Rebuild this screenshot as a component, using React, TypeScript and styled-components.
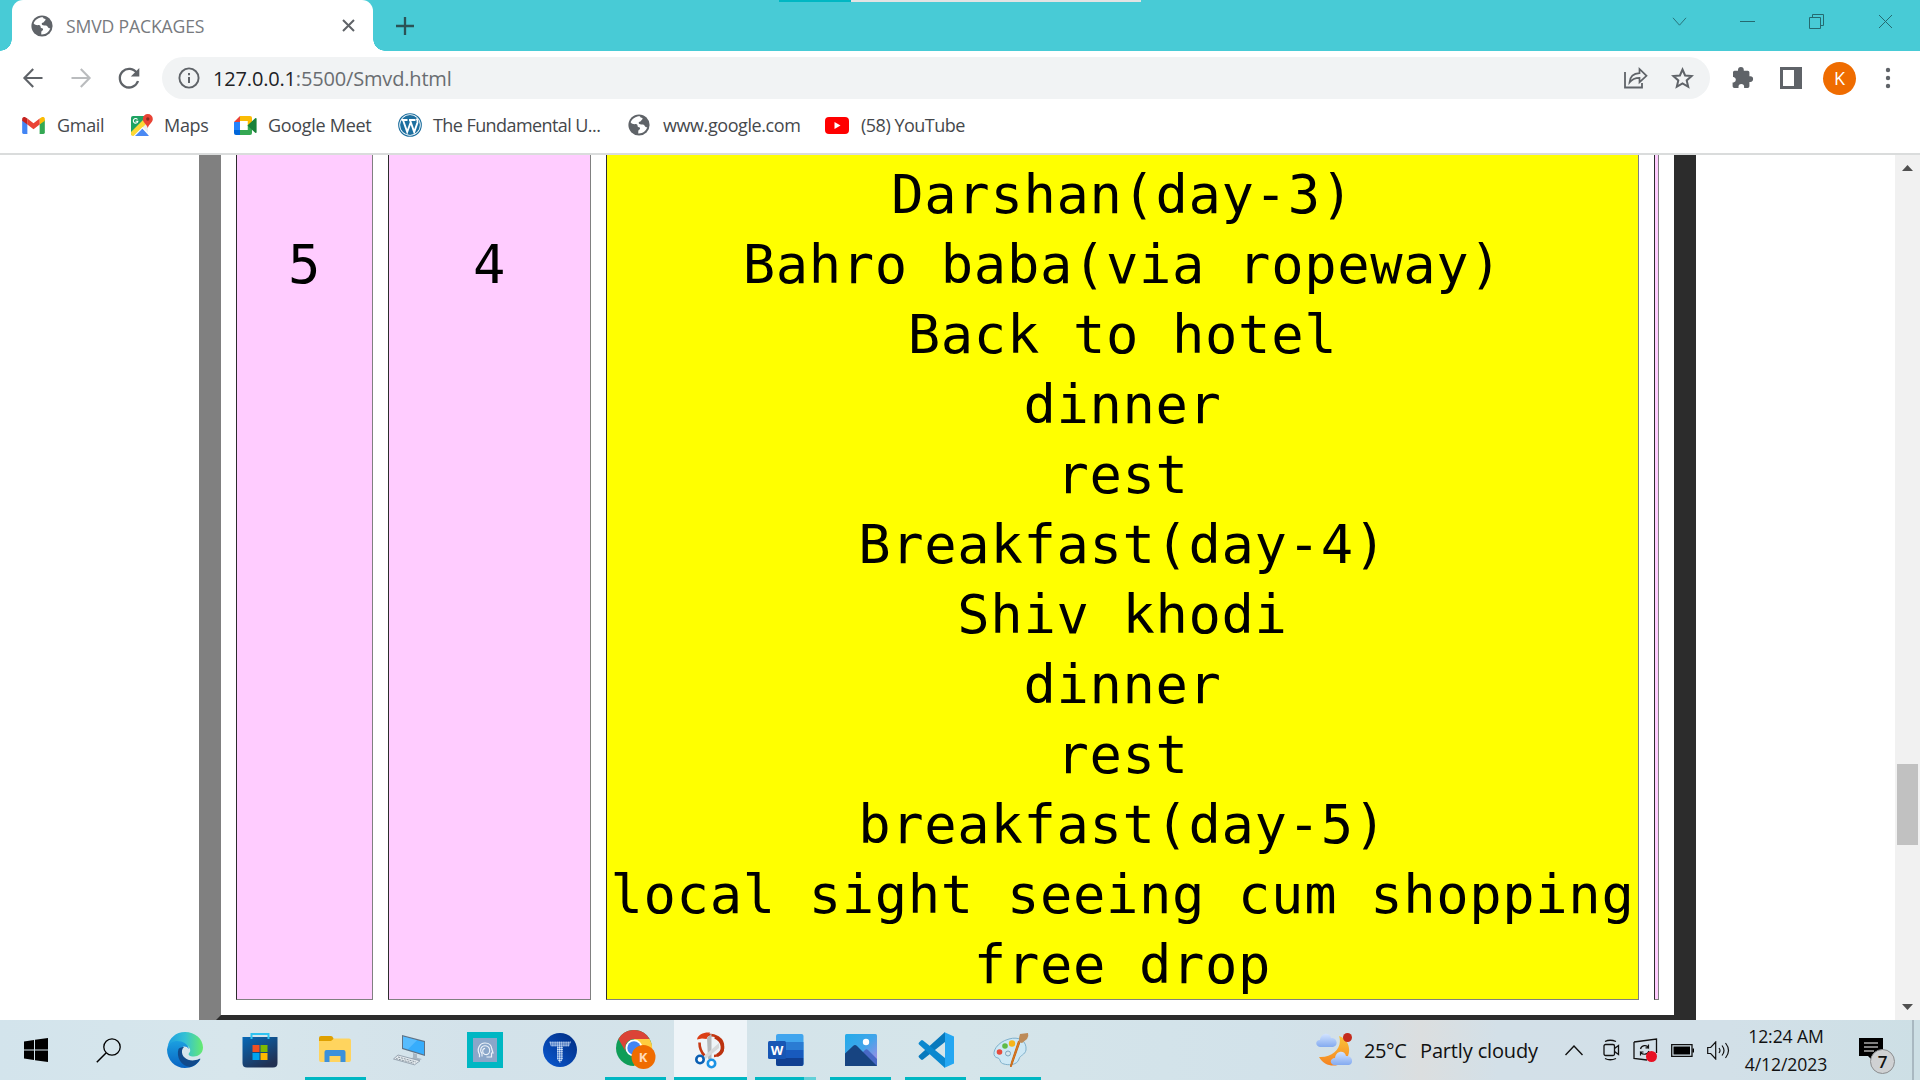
import React from "react";
import styled, { createGlobalStyle } from "styled-components";

const Global = createGlobalStyle`
  * { box-sizing: border-box; }
  body { margin: 0; overflow: hidden; background: #fff; font-family: "Open Sans", "Noto Sans", sans-serif; }
  svg { display: block; flex: none; }
`;

const Screen = styled.div`
  width: 1920px;
  height: 1080px;
  display: flex;
  flex-direction: column;
  overflow: hidden;
`;

/* ---------- Title bar ---------- */
const TabStrip = styled.header`
  height: 51px;
  flex: none;
  display: flex;
  background: #48cbd6;
  position: relative;
`;
const Tab = styled.div`
  width: 361px;
  height: 51px;
  margin-left: 12px;
  padding: 0 18px 0 19px;
  background: #fff;
  border-radius: 11px 11px 0 0;
  display: flex;
  align-items: center;
  position: relative;
  &::before, &::after {
    content: "";
    position: absolute;
    bottom: 0;
    width: 12px;
    height: 12px;
  }
  &::before { left: -12px; background: radial-gradient(circle at 0 0, #48cbd6 11.5px, #fff 12px); }
  &::after { right: -12px; background: radial-gradient(circle at 100% 0, #48cbd6 11.5px, #fff 12px); }
`;
const TabTitle = styled.span`
  flex: 1;
  margin-left: 13px;
  font-size: 17.6px;
  line-height: 24px;
  letter-spacing: -0.15px;
  color: #777a7e;
`;
const NewTab = styled.div`
  width: 40px;
  margin-left: 12px;
  display: flex;
  align-items: center;
  justify-content: center;
`;
const WindowButtons = styled.div`
  margin-left: auto;
  height: 43px;
  display: flex;
  align-items: center;
`;
const WinButton = styled.div<{ $w: number }>`
  width: ${p => p.$w}px;
  display: flex;
  justify-content: center;
`;
const TopStrip = styled.div`
  position: absolute;
  left: 779px;
  top: 0;
  width: 362px;
  height: 2px;
  background: linear-gradient(90deg, #00b7c3 72px, #e3e3e3 72px);
`;

/* ---------- Toolbar ---------- */
const Toolbar = styled.div`
  height: 54px;
  flex: none;
  display: flex;
  align-items: center;
  padding: 0 29px 0 21px;
`;
const NavButtons = styled.div`
  width: 141px;
  display: flex;
  align-items: center;
  gap: 24px;
`;
const AddressBar = styled.div`
  width: 1548px;
  height: 42px;
  border-radius: 21px;
  background: #f1f3f4;
  display: flex;
  align-items: center;
  padding: 0 16px;
`;
const Url = styled.div`
  flex: 1;
  margin-left: 13px;
  padding-top: 1px;
  font-size: 20px;
  line-height: 28px;
  letter-spacing: -0.17px;
  color: #696d71;
  b { font-weight: 400; color: #202124; }
`;
const AddressActions = styled.div`
  display: flex;
  gap: 22px;
  align-items: center;
`;
const ToolbarActions = styled.div`
  margin-left: auto;
  display: flex;
  align-items: center;
`;
const Avatar = styled.div`
  width: 33px;
  height: 33px;
  margin: 0 29px 0 21px;
  border-radius: 50%;
  background: #ef6c00;
  color: #fff;
  font: 18px/33px "Open Sans", sans-serif;
  text-align: center;
`;

/* ---------- Bookmarks ---------- */
const Bookmarks = styled.nav`
  height: 50px;
  flex: none;
  display: flex;
  align-items: center;
  padding: 0 0 8px 22px;
  border-bottom: 2px solid #dadcdc;
`;
const Bookmark = styled.div<{ $w: number; $gap?: number; $ls?: number }>`
  width: ${p => p.$w}px;
  display: flex;
  align-items: center;
  gap: ${p => p.$gap ?? 11}px;
  font-size: 18px;
  line-height: 26px;
  letter-spacing: ${p => p.$ls ?? -0.3}px;
  color: #45484c;
  white-space: nowrap;
`;

/* ---------- Page ---------- */
const Viewport = styled.main`
  height: 865px;
  flex: none;
  display: flex;
  overflow: hidden;
  background: #fff;
`;
const PageArea = styled.div`
  flex: 1;
  overflow: hidden;
  padding-left: 199px;
  display: flex;
  align-items: flex-start;
`;
const TableFrame = styled.div`
  width: 1497px;
  height: 882px;
  border: solid;
  border-width: 0 22px 22px;
  border-color: #2c2c2c #2c2c2c #2c2c2c #808080;
  padding: 0 15px 15px;
  display: flex;
  gap: 15px;
`;
const Cell = styled.div<{ $w: number; $fill?: string }>`
  width: ${p => p.$w}px;
  flex: none;
  height: 845px;
  overflow: hidden;
  border: solid;
  border-width: 0 1px 1px;
  border-color: #808080 #808080 #808080 #2c2c2c;
  background: ${p => p.$fill ?? "#fcf"};
  display: flex;
  flex-direction: column;
  justify-content: flex-end;
`;
const Line = styled.div`
  height: 70px;
  flex: none;
  font: 53.8px/72px "DejaVu Sans Mono", monospace;
  letter-spacing: 0.64px;
  text-align: center;
  white-space: pre;
  color: #000;
`;
const Lines = styled.div<{ $bottom: number }>`
  padding-bottom: ${p => p.$bottom}px;
`;
const Scrollbar = styled.aside`
  width: 25px;
  flex: none;
  background: #f1f1f1;
  display: flex;
  flex-direction: column;
  align-items: center;
`;
const Arrow = styled.div<{ $down?: boolean }>`
  height: 24px;
  display: flex;
  align-items: center;
  padding-top: 2px;
  transform: ${p => (p.$down ? "rotate(180deg)" : "none")};
`;
const Track = styled.div`
  flex: 1;
  width: 21px;
  padding-top: 585px;
`;
const Thumb = styled.div`
  height: 81px;
  background: #c1c1c1;
`;

/* ---------- Taskbar ---------- */
const Taskbar = styled.footer`
  height: 60px;
  flex: none;
  display: flex;
  background: linear-gradient(90deg, #d3e4ec 0%, #d7e6ec 12%, #d3e2ea 25%, #d5e5ea 50%, #d2e2ea 66%, #d3e0e7 71%, #dbdedf 74%, #d3e0e8 78%, #d2e0e8 90%, #cddfe5 100%);
`;
const Apps = styled.div`
  width: 1056px;
  flex: none;
  display: flex;
`;
const TaskButton = styled.div<{ $w?: number; $pad?: number; $active?: boolean; $stack?: boolean; $run?: boolean }>`
  width: ${p => p.$w ?? 75}px;
  height: 60px;
  flex: none;
  padding-left: ${p => p.$pad ?? 0}px;
  display: flex;
  flex-direction: column;
  align-items: center;
  justify-content: space-between;
  background: ${p => (p.$active ? "#eef4f8" : "transparent")};
  &::after {
    content: "";
    height: 3px;
    width: ${p => (p.$active ? "100%" : "61px")};
    background: ${p => (p.$run ? (p.$stack ? "linear-gradient(90deg,#00b7c3 49px,#62d0d8 49px)" : "#00b7c3") : "transparent")};
  }
`;
const AppIcon = styled.div`
  height: 57px;
  padding-top: 3px;
  display: flex;
  align-items: center;
`;
const Tray = styled.div`
  flex: 1;
  display: flex;
  align-items: center;
  padding-left: 260px;
  color: #111;
`;
const Weather = styled.div`
  width: 249px;
  display: flex;
  align-items: center;
  font-size: 20px;
  white-space: pre;
  letter-spacing: -0.15px;
`;
const Temp = styled.span`
  width: 56px;
  margin-left: 12px;
  letter-spacing: -0.4px;
`;
const Condition = styled.span`
  padding-top: 1px;
`;
const TrayIcons = styled.div`
  display: flex;
  align-items: center;
  gap: 13px;
  & > :first-child { margin-right: 7px; }
`;
const Clock = styled.div`
  width: 90px;
  margin-left: 11px;
  font-size: 17.6px;
  line-height: 28px;
  letter-spacing: -0.1px;
  text-align: center;
  white-space: nowrap;
`;
const Notice = styled.div`
  position: relative;
  width: 40px;
  height: 60px;
  margin-left: 28px;
  padding-top: 17px;
`;
const Badge = styled.div`
  position: absolute;
  left: 11px;
  top: 29px;
  width: 25px;
  height: 25px;
  border-radius: 50%;
  border: 1px solid #8b8d8f;
  background: #cfd1d3;
  font: 600 17px/23px "Open Sans", sans-serif;
  text-align: center;
`;
const ShowDesktop = styled.div`
  width: 8px;
  height: 60px;
  margin-left: auto;
  border-left: 2px solid #a9b8c1;
`;

const Globe = () => (
  <svg width="22" height="22" viewBox="0 0 22 22">
    <circle cx="11" cy="11" r="10.6" fill="#5f6368" />
    <path d="M12 2.2C8 2 4.3 4.4 2.6 8.3c1.3 1.8 3 2 5.2 1.8 1.2 0 1.8.8 1.8 2 .1 1 1 1.3 2.2 1.3.6 1 .2 1.8-.8 2.4-.8.6-.8 2-.7 3.6 4.3.3 7.7-2.4 9-6.2-1.6.2-2.2-.8-2.8-1.8-.8-1.2-2.6-.8-4.5-1.2-1.8-.4-1.8-2.6.2-2.8.9 0 .9-1.1 1.7-1.6.8-.5 1-1.3.1-2-.9-.3-1.8-.4-2-1.6Z" fill="#fff" />
  </svg>
);
const Cross = ({ s, w, c }: { s: number; w: number; c: string }) => (
  <svg width={s} height={s} viewBox={`0 0 ${s} ${s}`}><path d={`M1 1 ${s - 1} ${s - 1}M${s - 1} 1 1 ${s - 1}`} stroke={c} strokeWidth={w} /></svg>
);
const Back = ({ c, flip }: { c: string; flip?: boolean }) => (
  <svg width="24" height="22" viewBox="0 0 24 22"><path transform={flip ? "translate(24 0) scale(-1 1)" : undefined} d="M21.5 11H4M12.2 2 3.4 11l8.8 9" fill="none" stroke={c} strokeWidth="2.1" /></svg>
);
const Reload = () => (
  <svg width="24" height="24" viewBox="0 0 24 24"><path d="M20 7.2A9.3 9.3 0 1 0 21 15" fill="none" stroke="#5f6368" strokeWidth="2.3" /><path d="M22.3 2v8.500h-8.500Z" fill="#5f6368" /></svg>
);
const Info = () => (
  <svg width="22" height="22" viewBox="0 0 22 22"><circle cx="11" cy="11" r="9.6" fill="none" stroke="#5f6368" strokeWidth="1.9" /><path d="M11 10v6M11 6v2.2" stroke="#5f6368" strokeWidth="2" /></svg>
);
const Share = () => (
  <svg width="26" height="24" viewBox="0 0 26 24"><path d="M2 6v15.5h17V17" fill="none" stroke="#5f6368" strokeWidth="1.8" /><path d="M6.5 16.5C7 10.5 11 7.5 16.5 7.2V3l7 6.8-7 6.4v-4.3c-4.3 0-7.2 1-10 4.6Z" fill="none" stroke="#5f6368" strokeWidth="1.7" /></svg>
);
const Star = () => (
  <svg width="23" height="22" viewBox="0 0 23 22"><path d="m11.5 2.5 2.6 6 6.5.6-4.9 4.3 1.5 6.4-5.7-3.4-5.7 3.4 1.5-6.4-4.9-4.3 6.5-.6Z" fill="none" stroke="#5f6368" strokeWidth="2" /></svg>
);
const Puzzle = () => (
  <svg width="22" height="22" viewBox="0 0 22 22"><path d="M1 5.2Q1 3.7 2.5 3.7H6V3a2.9 2.9 0 0 1 5.8 0v.7h4q1.6 0 1.6 1.6v4h.9a2.8 2.8 0 0 1 0 5.6h-.9v4.3q0 1.8-1.7 1.8h-3.6v-1.2a2.8 2.8 0 0 0-5.6 0V21H2.4Q.6 21 .6 19.2v-3.7h1a2.8 2.8 0 0 0 0-5.5H1Z" fill="#5f6368" /></svg>
);
const SidePanel = () => (
  <svg width="22" height="22" viewBox="0 0 22 22"><path d="M0 0h22v22H0ZM3 3v16h11V3Z" fill="#5f6368" fillRule="evenodd" /></svg>
);
const Dots = () => (
  <svg width="6" height="22" viewBox="0 0 6 22" fill="#5f6368"><circle cx="3" cy="3" r="2.2" /><circle cx="3" cy="11" r="2.2" /><circle cx="3" cy="19" r="2.2" /></svg>
);
const Gmail = () => (
  <svg width="23" height="17" viewBox="0 0 24 18"><path d="M0 3v13.5Q0 18 1.5 18h4V7Z" fill="#4285f4" /><path d="M18.5 18h4q1.5 0 1.5-1.5V3l-5.5 4Z" fill="#34a853" /><path d="M18.5 1.5V8L24 4V2.2c0-2.3-2.3-2.8-3.8-1.8Z" fill="#fbbc04" /><path d="M5.5 8V1.5l6.5 5 6.5-5V8L12 13Z" fill="#ea4335" /><path d="M0 2.2V4l5.5 4V1.5L3.8.4C2.2-.6 0 .2 0 2.2Z" fill="#c5221f" /></svg>
);
const Maps = () => (
  <svg width="23" height="23" viewBox="0 0 23 23"><path d="M1 4q0-2 2-2h12l3 9v11H3q-2 0-2-2Z" fill="#eceff1" /><path d="M1 4q0-2 2-2h12l-2 8L1 21Z" fill="#1ea362" /><path d="M1 18 13 6l3 4L4 22H3q-2 0-2-2Z" fill="#fdd835" /><path d="m4 22 8-8 7 8Z" fill="#4a89f3" /><path d="m3.500 22 9-9 7 7v1.500l-7-7L5 22Z" fill="#fff" /><path d="M7.500 5.500a2.300 2.300 0 1 0 .4 1.700H5.600" stroke="#fff" strokeWidth="1.100" fill="none" /><path d="M17.8 0a5 5 0 0 0-5 5c0 3.2 3.6 5 5 9 1.3-4 5-5.8 5-9a5 5 0 0 0-5-5Z" fill="#e84335" /><circle cx="17.8" cy="5" r="1.7" fill="#8c2b20" /></svg>
);
const Meet = () => (
  <svg width="23" height="19" viewBox="0 0 23 19"><path d="M6 0h10q2 0 2 2v4l-4.500 4V5H6Z" fill="#fbbc04" /><path d="M0 6 6 0v6Z" fill="#ea4335" /><path d="M0 6h6v8H0Z" fill="#2684fc" /><path d="M0 14h6v5H2q-2 0-2-2Z" fill="#0066da" /><path d="M6 14h7.500V9.500L18 6v11q0 2-2 2H6Z" fill="#34a853" /><path d="M6 5h7.500v9H6Z" fill="#fff" /><path d="m13.500 9.500 7.700-7.300q1.400-.5 1.400.8v13q0 1.300-1.400.8Z" fill="#188038" /></svg>
);
const WordPress = () => (
  <svg width="24" height="24" viewBox="0 0 24 24"><circle cx="12" cy="12" r="11.300" fill="#fff" stroke="#1d6f9f" strokeWidth="1.100" /><circle cx="12" cy="12" r="9.900" fill="#1d6f9f" /><path d="M3.500 7h6M11 7h6.500M5 7l4.200 12L12.800 9M12 7l4.200 12L19.500 9.500q.5-2-1-4" fill="none" stroke="#fff" strokeWidth="1.900" /></svg>
);
const YouTube = () => (
  <svg width="24" height="17" viewBox="0 0 24 17"><rect width="24" height="17" rx="4" fill="#f00" /><path d="M9.500 5v7l6-3.500Z" fill="#fff" /></svg>
);

const Windows = () => (
  <svg width="24" height="24" viewBox="0 0 24 24"><path d="M0 3.400 10 2v9.500H0ZM11 1.800 24 0v11.500H11ZM0 12.500h10V22L0 20.600ZM11 12.500h13V24l-13-1.800Z" /></svg>
);
const Search = () => (
  <svg width="25" height="25" viewBox="0 0 25 25"><circle cx="16" cy="9" r="8.200" fill="none" stroke="#000" strokeWidth="1.300" /><path d="M10 15 .8 24.200" stroke="#000" strokeWidth="1.500" /></svg>
);
const Edge = () => (
  <svg width="36" height="36" viewBox="0 0 36 36">
    <defs>
      <linearGradient id="eg1" x1="0" x2="1"><stop stopColor="#1b9de2" /><stop offset=".5" stopColor="#35c1d4" /><stop offset="1" stopColor="#66eb6e" /></linearGradient>
      <linearGradient id="eg2" x1="0" y1="0" x2="0" y2="1"><stop stopColor="#1b9fe0" /><stop offset="1" stopColor="#0863c2" /></linearGradient>
    </defs>
    <path d="M.6 15C2 6 9 0 18 0c10 0 18 7 18 15.500 0 6-5 9-9 9-5 0-6.500-1.800-4.500-4 2-2 0-7-5-7.500C10 9 4 10 .6 15Z" fill="url(#eg1)" />
    <path d="M0 17.500C1 11 6.500 9 10 9c6 0 11 3.500 12 8-4-5-9-2-9 3.500C13 27 18 31 25 31c3 0 5-1.500 8-3-3 5-8.500 8-15 8C8 36 0 28 0 17.500Z" fill="url(#eg2)" />
    <path d="M11.500 17C9 25 14 34 23 35c4-1 8-4 10.500-8-.4-.6-1-.2-1.500 0-9 4-18-1-17-8.500.3-1.400 1-2.500 2-3.500-2 0-4 .5-5.500 2Z" fill="#114a8b" />
  </svg>
);
const Store = () => (
  <svg width="36" height="36" viewBox="0 0 36 36">
    <defs><linearGradient id="st" x1="0" y1="0" x2=".6" y2="1"><stop stopColor="#0669b8" /><stop offset="1" stopColor="#213153" /></linearGradient></defs>
    <path d="M.5 5h35v26q0 4.500-4.500 4.500H5Q.5 35.500.5 31Z" fill="url(#st)" />
    <path d="M9.500 7V2h17v5" fill="none" stroke="#30c3f1" strokeWidth="2" />
    <path d="M10.500 13h7v7h-7Z" fill="#f25022" /><path d="M18.500 13h7v7h-7Z" fill="#7fba00" /><path d="M10.500 21h7v7h-7Z" fill="#00a4ef" /><path d="M18.500 21h7v7h-7Z" fill="#ffb900" />
  </svg>
);
const Folder = () => (
  <svg width="32" height="28" viewBox="0 0 32 28"><path d="M0 2q0-2 2-2h10q1.500 0 2.300 2L15.500 5H0Z" fill="#dfa000" /><path d="M0 5h12l3-2.500h15q2 0 2 2V24q0 2-2 2H2q-2 0-2-2Z" fill="#ffd45e" /><path d="M5.500 26V16q0-2 2-2h17q2 0 2 2v10h-5v-6h-11v6Z" fill="#3c91db" /></svg>
);
const Computer = () => (
  <svg width="34" height="32" viewBox="0 0 34 32"><path d="m9 1 23 6v15L9 15Z" fill="#5f7285" /><path d="m10 2.500 21 5.500v12.500L10 14Z" fill="#37adfc" /><path d="m13 3.300 11 3-9 9-5-1.500V2.500Z" fill="#6cc6ff" opacity=".6" /><path d="m20 19 4 1.200v3.500l5 1.200-4 2-8-2 3-1.500Z" fill="#a8b6c2" /><path d="m5 21 22 5.800-5.500 4L.5 25Z" fill="#e4eaee" stroke="#8896a3" strokeWidth=".8" /><path d="m5 23 18 5M3 24.600l18 4.700" stroke="#8996a0" strokeDasharray="2 1" /></svg>
);
const HeadTile = () => (
  <svg width="36" height="36" viewBox="0 0 36 36"><path fill="#00b7c3" d="M0 0h36v36H0Z" /><path fill="#8aa6c9" d="M6 6h24v24H6Z" /><path d="M12.500 25.300v-3c-3-5 0-11.300 5.500-11.300 4 0 6.500 2.500 6.800 6l1.200 4h-1.500v4h-5" fill="none" stroke="#edf3fa" strokeWidth="1.200" /><path d="M15 24.500v-2.800c-3-4-.5-8 3-8 4.500 0 5.500 4.500 4 7.300-1 1.500-3 1.800-4.500 1.200-3-1.500-2-5.800.6-5.800" fill="none" stroke="#edf3fa" strokeWidth="1.100" /></svg>
);
const TIcon = () => (
  <svg width="34" height="34" viewBox="0 0 34 34">
    <defs><pattern id="td" width="2.200" height="2.200" patternUnits="userSpaceOnUse"><circle cx="1.100" cy="1.100" r=".95" fill="#e4f1ff" /></pattern>
      <linearGradient id="tb" x1="1" y1="0" x2="0" y2="1"><stop stopColor="#002b80" /><stop offset="1" stopColor="#0b5ad2" /></linearGradient></defs>
    <circle cx="17" cy="17" r="17" fill="url(#tb)" /><path d="M6 8.500h22l-2 5h-6V26l-3 4-3-4V13.500H8Z" fill="url(#td)" />
  </svg>
);
const Chrome = () => (
  <svg width="40" height="40" viewBox="0 0 40 40"><circle cx="18" cy="18" r="18" fill="#0f9d58" /><path d="M18 9h15.600A18 18 0 0 1 18 36l8-14Z" fill="#ffcd40" /><path d="M2.400 9A18 18 0 0 1 33.600 9H18a9 9 0 0 0-8 13Z" fill="#db4437" /><circle cx="18" cy="18" r="8.500" fill="#fff" /><circle cx="18" cy="18" r="6.700" fill="#4285f4" /><circle cx="27.500" cy="27" r="12" fill="#ef6c00" /><text x="27" y="31.500" fill="#ffd9b8" fontSize="13" fontWeight="700" textAnchor="middle" fontFamily="Open Sans">K</text></svg>
);
const Snip = () => (
  <svg width="32" height="37" viewBox="0 0 32 37"><path d="M4.500 10.500q0 8 5 13M9 3.500C20 1 29 7 28 16c-.5 5-4 8-9 8" fill="none" stroke="#c63813" strokeWidth="2.600" /><path d="M2 7.500C3 2 9 0 15 .5L11.500 7 7 6.500Z" fill="#db3e16" /><path d="M20 5c9 4 10 15 2 18.500" fill="none" stroke="#bb3210" strokeWidth="3.500" /><path d="M12 6 16.500 1.500V27h-3.500Z" fill="#b5b8ba" /><path d="M24 11v5L10.500 27 9 24Z" fill="#d5d8da" /><circle cx="5" cy="27.500" r="3.700" fill="#fff" stroke="#0a5fb3" strokeWidth="2.600" /><circle cx="16.500" cy="31.500" r="3.700" fill="#fff" stroke="#1b93e5" strokeWidth="2.600" /></svg>
);
const Word = () => (
  <svg width="36" height="33" viewBox="0 0 36 33"><rect x="8" width="27.500" height="32" rx="2" fill="#41a5ee" /><path d="M8 8h27.500v8H8Z" fill="#2b7cd3" /><path d="M8 16h27.500v8H8Z" fill="#185abd" /><path d="M8 24h27.500v6q0 2-2 2H10q-2 0-2-2Z" fill="#103f91" /><rect y="7" width="18" height="18" rx="1.500" fill="#1756b4" /><text x="9" y="20.500" fill="#fff" fontSize="13" fontWeight="700" textAnchor="middle" fontFamily="Open Sans">W</text></svg>
);
const Photos = () => (
  <svg width="32" height="32" viewBox="0 0 32 32"><defs><linearGradient id="ph" x1="0" y1="0" x2="1" y2="1"><stop stopColor="#23abe9" /><stop offset=".5" stopColor="#41a5ea" /><stop offset="1" stopColor="#b287e2" /></linearGradient></defs><rect width="32" height="32" rx="1.500" fill="url(#ph)" /><path d="m17 19 3-3q1.500-1.500 3 0l9 9v7H17Z" fill="#4869c6" /><path d="m0 19.500 8-7.500q2-1.800 4 0l20 20H0Z" fill="#174481" /><circle cx="21" cy="8" r="3.200" fill="#fff" /></svg>
);
const VSCode = () => (
  <svg width="36" height="36" viewBox="0 0 36 36"><path d="M27 0 1 23.500q-1 1 0 2l2 2q1 .8 2 0L27 10Z" fill="#0879bd" /><path d="M27 36 1 12.500q-1-1 0-2l2-2q1-.8 2 0L27 26Z" fill="#0b88cf" /><path d="M26 0 36 4.500v27L26 36q1-.5 1-2V2q0-1.500-1-2Z" fill="#25a7f2" /></svg>
);
const Paint = () => (
  <svg width="36" height="35" viewBox="0 0 36 35"><path d="M16 6C26 3 34 8 33 17c-1 5-6 5-7 9-2 7-12 6-15 5-5-1-3-5-6-6C-3 24 1 10 16 6Z" fill="#cde8f5" stroke="#7fb0cb" /><circle cx="15" cy="20.500" r="2.500" fill="#d6e6ed" stroke="#7ca5bd" /><circle cx="6.500" cy="19" r="2.800" fill="#e64b3c" /><circle cx="12" cy="13" r="2.800" fill="#5fbb46" /><circle cx="19" cy="10.500" r="3.200" fill="#f7b519" /><path d="m27 9-8.500 24q-.8 2-1 0l1-4 7-21Z" fill="#e57f22" stroke="#c76815" /><path d="m26 5 1-4 8-1q1 3-1 6l-5 4-3-1Z" fill="#bd8b59" /></svg>
);
const Moon = () => (
  <svg width="36" height="34" viewBox="0 0 36 34"><defs><linearGradient id="mo" x1="0" y1="0" x2="0" y2="1"><stop stopColor="#fac53b" /><stop offset="1" stopColor="#f58220" /></linearGradient><linearGradient id="cl" x1="0" y1="0" x2="0" y2="1"><stop stopColor="#d3e4ff" /><stop offset="1" stopColor="#83aaf0" /></linearGradient></defs><path d="M23 3c9 3 12 12 9 20-4 11-22 14-29 1 14 1 24-10 20-21Z" fill="url(#mo)" /><path d="M4 14c-5-1-5-7 0-7C5-1 14-1 15 5c6-1 8 8 2 9Z" fill="url(#cl)" /><path d="M18 32c-5-1-4-7 1-7 1-8 10-8 11-2 7-1 8 8 3 9Z" fill="url(#cl)" /><circle cx="31.500" cy="4.500" r="4.500" fill="#c42b1c" /></svg>
);
const Chevron = ({ w, down, c = "#111", s = 1.4 }: { w: number; down?: boolean; c?: string; s?: number }) => (
  <svg width={w} height={down ? 9 : 11} viewBox="0 0 18 11"><path d={down ? "m1 1 8 9 8-9" : "m.5 10 8.500-9 8.500 9"} fill="none" stroke={c} strokeWidth={s} /></svg>
);
const MeetNow = () => (
  <svg width="17" height="22" viewBox="0 0 17 22" fill="none" stroke="#111" strokeWidth="1.300"><rect x="1" y="5.500" width="10.500" height="11" rx="1.500" /><path d="m11.500 9.500 4-3v9l-4-3M2 2.500Q7 0 13 2.500M2 19.500q5 2.500 11 0" /></svg>
);
const Update = () => (
  <svg width="25" height="24" viewBox="0 0 25 24"><path d="M1 4 23.500 1v14M1 4v16.500l13 1.500" fill="none" stroke="#111" strokeWidth="1.300" /><path d="M7.500 11c1-4 6-4.500 8-1.500V6.500M15.500 9.800h-3M16 13c-1.500 4-6 4-8.500 1.500v3M7.500 14h3" fill="none" stroke="#111" strokeWidth="1.200" /><circle cx="18.500" cy="18.500" r="5.500" fill="#e81123" /></svg>
);
const Battery = () => (
  <svg width="23" height="13" viewBox="0 0 23 13"><path d="M.7.7h20.300v11.600H.7Z" fill="none" stroke="#111" strokeWidth="1.300" /><path d="M2.500 2.500h16.500v8H2.500Z" /><path d="M21.500 4.500H23v4h-1.500Z" /></svg>
);
const Volume = () => (
  <svg width="23" height="19" viewBox="0 0 23 19" fill="none" stroke="#111" strokeWidth="1.200"><path d="M.7 6.500h3l5-5.500v17l-5-5.500h-3ZM12 7q2 2.500 0 5M15 4.500q4 5 0 10M18.500 2q6 7.500 0 15" /></svg>
);
const NoticeIcon = () => (
  <svg width="24" height="24" viewBox="0 0 24 24"><path d="M0 1h24v18H14v5l-5-5H0Z" /><path d="M5 6h14M5 10h14M5 14h10" stroke="#fff" strokeWidth="1.100" /></svg>
);

const itinerary = [
  "         y)",
  "Darshan(day-3)",
  "Bahro baba(via ropeway)",
  "Back to hotel",
  "dinner",
  "rest",
  "Breakfast(day-4)",
  "Shiv khodi",
  "dinner",
  "rest",
  "breakfast(day-5)",
  "local sight seeing cum shopping",
  "free drop",
];

const glyph = "#256a70";

export default function App() {
  return (
    <Screen>
      <Global />
      <TabStrip>
        <Tab><Globe /><TabTitle>SMVD PACKAGES</TabTitle><Cross s={13} w={2} c="#5f6368" /></Tab>
        <NewTab><svg width="18" height="18" viewBox="0 0 18 18"><path d="M9 0v18M0 9h18" stroke="#2b5256" strokeWidth="2.300" /></svg></NewTab>
        <WindowButtons>
          <WinButton $w={68}><Chevron w={15} down c={glyph} s={1.1} /></WinButton>
          <WinButton $w={69}><svg width="15" height="1"><path d="M0 .5h15" stroke={glyph} /></svg></WinButton>
          <WinButton $w={69}><svg width="15" height="15" viewBox="0 0 15 15" fill="none" stroke={glyph}><path d="M.5 3.500h11v11H.5ZM3.500 3V.5h11v11h-2.500" /></svg></WinButton>
          <WinButton $w={69}><Cross s={15} w={1} c={glyph} /></WinButton>
        </WindowButtons>
        <TopStrip />
      </TabStrip>
      <Toolbar>
        <NavButtons><Back c="#5f6368" /><Back c="#babcbe" flip /><Reload /></NavButtons>
        <AddressBar>
          <Info />
          <Url><b>127.0.0.1</b>:5500/Smvd.html</Url>
          <AddressActions><Share /><Star /></AddressActions>
        </AddressBar>
        <ToolbarActions><Puzzle /><svg width="26" height="1" /><SidePanel /><Avatar>K</Avatar><Dots /></ToolbarActions>
      </Toolbar>
      <Bookmarks>
        <Bookmark $w={108} $gap={12}><Gmail />Gmail</Bookmark>
        <Bookmark $w={104}><Maps />Maps</Bookmark>
        <Bookmark $w={164}><Meet />Google Meet</Bookmark>
        <Bookmark $w={230} $ls={-0.58}><WordPress />The Fundamental U...</Bookmark>
        <Bookmark $w={197} $gap={13} $ls={-0.42}><Globe />www.google.com</Bookmark>
        <Bookmark $w={150} $gap={12} $ls={-0.5}><YouTube />(58) YouTube</Bookmark>
      </Bookmarks>
      <Viewport>
        <PageArea>
          <TableFrame>
            <Cell $w={137}><Lines $bottom={700}><Line>5</Line></Lines></Cell>
            <Cell $w={203}><Lines $bottom={700}><Line>4</Line></Lines></Cell>
            <Cell $w={1033} $fill="#ff0"><Lines $bottom={0}>{itinerary.map((t, i) => <Line key={i}>{t}</Line>)}</Lines></Cell>
            <Cell $w={5} />
          </TableFrame>
        </PageArea>
        <Scrollbar>
          <Arrow><svg width="11" height="6" viewBox="0 0 11 6"><path d="M5.500 0 11 6H0Z" fill="#505050" /></svg></Arrow>
          <Track><Thumb /></Track>
          <Arrow $down><svg width="11" height="6" viewBox="0 0 11 6"><path d="M5.500 0 11 6H0Z" fill="#505050" /></svg></Arrow>
        </Scrollbar>
      </Viewport>
      <Taskbar>
        <Apps>
          <TaskButton $w={72}><AppIcon><Windows /></AppIcon></TaskButton>
          <TaskButton $w={72}><AppIcon><Search /></AppIcon></TaskButton>
          <TaskButton $w={82}><AppIcon><Edge /></AppIcon></TaskButton>
          <TaskButton $w={68}><AppIcon><Store /></AppIcon></TaskButton>
          <TaskButton $w={82} $run><AppIcon><Folder /></AppIcon></TaskButton>
          <TaskButton $w={68}><AppIcon><Computer /></AppIcon></TaskButton>
          <TaskButton $w={82}><AppIcon><HeadTile /></AppIcon></TaskButton>
          <TaskButton $w={68}><AppIcon><TIcon /></AppIcon></TaskButton>
          <TaskButton $w={80} $pad={3} $run><AppIcon><Chrome /></AppIcon></TaskButton>
          <TaskButton $w={73} $run $active><AppIcon><Snip /></AppIcon></TaskButton>
          <TaskButton $w={77} $run $stack><AppIcon><Word /></AppIcon></TaskButton>
          <TaskButton $w={73} $run><AppIcon><Photos /></AppIcon></TaskButton>
          <TaskButton $w={77} $run><AppIcon><VSCode /></AppIcon></TaskButton>
          <TaskButton $w={73} $run><AppIcon><Paint /></AppIcon></TaskButton>
        </Apps>
        <Tray>
          <Weather><Moon /><Temp>25°C</Temp><Condition>Partly cloudy</Condition></Weather>
          <TrayIcons><Chevron w={18} /><MeetNow /><Update /><Battery /><Volume /></TrayIcons>
          <Clock>12:24 AM<br />4/12/2023</Clock>
          <Notice><NoticeIcon /><Badge>7</Badge></Notice>
          <ShowDesktop />
        </Tray>
      </Taskbar>
    </Screen>
  );
}
